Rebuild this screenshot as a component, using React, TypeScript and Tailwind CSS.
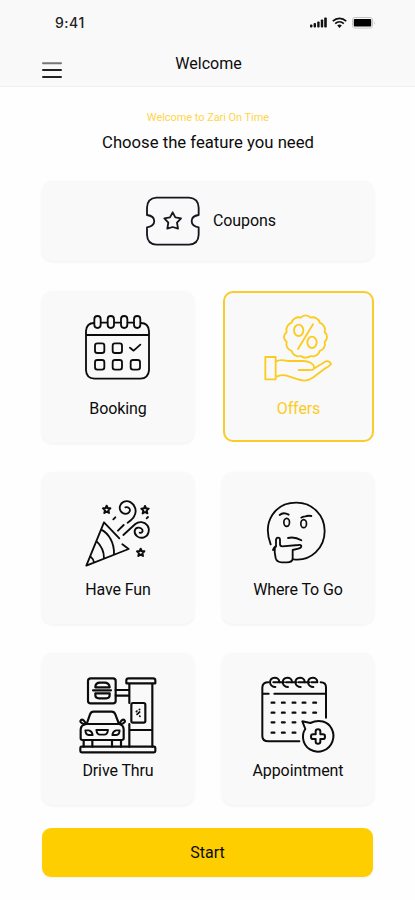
import type { ReactNode } from "react";

interface FeatureCardProps {
  label: string;
  viewBox: string;
  active?: boolean;
  children: ReactNode;
}

function FeatureCard({ label, viewBox, active, children }: FeatureCardProps) {
  return (
    <button
      className={`flex flex-col items-center rounded-[10px] bg-[#f9f9f9] ${
        active
          ? "h-[151px] w-[151px] justify-self-end text-[#fccb1f] outline-2 -outline-offset-2 outline-[#fbcb2b]"
          : "h-[152px] w-[152px] text-[#0c0c0c] shadow-[0_1px_3px_rgba(0,0,0,0.06)]"
      }`}
    >
      <svg
        className="mt-[15px] h-[92px] w-[92px] shrink-0"
        viewBox={viewBox}
        fill="none"
        stroke="currentColor"
        strokeWidth="5.5"
        strokeLinecap="round"
        strokeLinejoin="round"
      >
        {children}
      </svg>
      <span className="mt-px whitespace-nowrap text-base leading-5 tracking-[-0.1px]">{label}</span>
    </button>
  );
}

const STAR = "M0-10l3 7 8 1-6 6 2 8-7-4-7 4 2-8-6-6 8-1z";

function StatusBar() {
  return (
    <div className="flex h-[45px] items-center justify-between pl-[55px] pr-[39px]">
      <span className="font-['Inter'] text-sm font-medium tracking-[0.5px] text-[#222]">9:41</span>
      <div className="flex items-center gap-[5px] text-[#111]">
        <svg width="17" height="11" viewBox="0 0 17 11" fill="currentColor">
          <rect x="0" y="7.5" width="2.4" height="3" rx="0.8" />
          <rect x="3.6" y="6" width="2.4" height="4.5" rx="0.8" />
          <rect x="7.2" y="4.5" width="2.4" height="6" rx="0.8" />
          <rect x="10.8" y="2.5" width="2.4" height="8" rx="0.8" />
          <rect x="14.2" y="0.5" width="2.6" height="10" rx="0.8" />
        </svg>
        <svg width="15" height="11" viewBox="0 0 15 11" fill="none" stroke="currentColor" strokeWidth="1.7">
          <path d="M0.8 4.1C4.6.4 10.4.4 14.2 4.1M3.2 6.6c2.5-2.4 6.1-2.4 8.6 0" />
          <path d="M5.2 8.5c1.4-1.2 3.2-1.2 4.6 0L7.5 10.9z" fill="currentColor" stroke="none" />
        </svg>
        <svg width="24" height="12" viewBox="0 0 24 12">
          <rect x="0.5" y="0.5" width="20" height="10.6" rx="2.5" fill="none" stroke="#c4c4c4" />
          <rect x="1.8" y="2" width="17.4" height="7.6" rx="1" fill="#000" />
          <path d="M22 4.2v3.4q1.6-1.7 0-3.4z" fill="#b5b5b5" />
        </svg>
      </div>
    </div>
  );
}

export default function App() {
  return (
    <div className="flex h-[900px] w-full flex-col overflow-hidden bg-[#fefefe] font-['Roboto',sans-serif] text-[#0c0c0c]">
      <header className="h-[87px] shrink-0 border-b border-[#efefef] bg-[#f9f9f9]">
        <StatusBar />
        <div className="grid grid-cols-[1fr_auto_1fr] items-start pl-[42px] pr-10">
          <svg className="mt-4" width="20" height="18" viewBox="0 0 20 18" strokeWidth="2" strokeLinecap="round">
            <path d="M1 2.2h18" stroke="#777" />
            <path d="M1 9h18M1 16h18" stroke="#222" />
          </svg>
          <h1 className="mt-[7px] text-base leading-6">Welcome</h1>
        </div>
      </header>

      <main className="flex flex-col pl-[42px] pr-[41px]">
        <p className="mt-[23px] text-center text-[11px] leading-4 tracking-[-0.05px] text-[#ffd54a]">
          Welcome to Zari On Time
        </p>
        <h2 className="mt-[7px] text-center text-[16.7px] leading-5">Choose the feature you need</h2>

        <button className="mt-7 flex h-20 items-center rounded-[10px] bg-[#f9f9f9] pl-[103px] shadow-[0_1px_3px_rgba(0,0,0,0.06)]">
          <svg
            width="56"
            height="50"
            viewBox="345 286 168 150"
            fill="none"
            stroke="#17151f"
            strokeWidth="5.5"
            strokeLinejoin="round"
          >
            <path d="M379 291h98q28 2 29 30v22c-28 4-28 32 0 37v22q-1 28-29 30h-98q-27-2-28-30v-22c29-5 29-33 0-37v-22q1-28 28-30z" />
            <path d="M428 335l8 15 17 3-12 13 3 18-16-5-16 5 3-18-12-13 17-3z" />
          </svg>
          <span className="ml-3 text-base tracking-[-0.1px]">Coupons</span>
        </button>

        <div className="mt-[30px] grid grid-cols-[152px_152px] justify-between gap-y-[29px]">
          <FeatureCard label="Booking" viewBox="-9 3 276 276">
            <path d="M57 54q-22 0-24 24v118q1 24 25 25h138q24-1 26-25V78q-2-24-24-24M34 90h187M79 53h18M119 53h18M158 53h18" />
            <rect x="58" y="33" width="19" height="36" rx="9.5" />
            <rect x="98" y="33" width="19" height="36" rx="9.5" />
            <rect x="138" y="33" width="19" height="36" rx="9.5" />
            <rect x="177" y="33" width="19" height="36" rx="9.5" />
            <rect x="60" y="115" width="28" height="29" rx="7" />
            <rect x="113" y="115" width="28" height="29" rx="7" />
            <path d="M165 128l11 9 20-18" />
            <rect x="60" y="165" width="28" height="29" rx="7" />
            <rect x="113" y="165" width="28" height="29" rx="7" />
            <rect x="167" y="165" width="28" height="29" rx="7" />
          </FeatureCard>

          <FeatureCard label="Offers" viewBox="-6 3 276 276" active>
            <path d="M152 31q9 0 15 7 9-3 17 2 8 4 10 13 9 3 13 11 5 8 2 17 7 7 7 15t-7 15q3 9-2 17-4 8-13 10-2 9-10 13-8 5-17 2-7 5-15 5t-15-5q-9 3-17-2-8-4-10-13-9-2-13-10-5-8-2-17-8-7-8-15t8-15q-3-9 2-17 4-8 13-11 2-9 10-13 8-5 17-2 6-7 15-7z" />
            <path d="M174 58l-45 74" />
            <ellipse cx="131" cy="76" rx="14" ry="17" />
            <ellipse cx="171" cy="112" rx="14" ry="17" />
            <path d="M31 156h31v67H31zM62 170c14-9 25-4 37-2h45c19 0 31 8 33 17 2 10-7 11-15 10h-31M181 188l32-19q10-3 15 8-7 9-17 13l-38 28c-19 13-32 9-51 3l-27-9c-12-4-20-1-32 3" />
          </FeatureCard>

          <FeatureCard label="Have Fun" viewBox="-9 -9 276 276">
            <path d="M87 97L34 227l127-50-19-14M87 97l46 48M79 119c22 12 39 38 38 73M65 154c13 12 22 27 22 51M47 200c6 5 9 11 10 18" />
            <path d="M115 88l6-6M129 122l17-17M158 98c20-13 28-28 22-45-6-15-20-23-33-18-12 5-16 18-10 28 7 11 22 11 27 1 3-8-4-14-13-12" />
            <path d="M145 135l36-33c11-9 27-7 36 4 9 12 4 32-10 36-15 5-30-6-28-20 3-11 18-12 23-3 3 6-2 11-8 9M215 85l4-4" />
            <g strokeWidth="6">
              <path d={STAR} transform="translate(95 57)" />
              <path d={STAR} transform="translate(210 58)" />
              <path d={STAR} transform="translate(197 186)" />
            </g>
          </FeatureCard>

          <FeatureCard label="Where To Go" viewBox="-7 -9 276 276">
            <path d="M49 163C23 95 62 38 126 38c48 0 85 37 85 85 0 51-41 92-94 85" />
            <path d="M76 75q11-10 27-1M141 83q8-4 12-4 8-3 18-1M101 144q20-5 40 7" />
            <ellipse cx="97" cy="97" rx="8.5" ry="12" strokeWidth="5" />
            <ellipse cx="148" cy="101" rx="8.5" ry="12" strokeWidth="5" />
            <path d="M65 170v-20q1-7 6-7 6 0 6 7v13q0 6 7 6l48-4q9-1 9 4t-9 7l-17 4v25q-1 12-17 12H82q-14 0-18-12-5-18-2-35M62 170q-5 5-6 10" />
          </FeatureCard>

          <FeatureCard label="Drive Thru" viewBox="6 0 276 276">
            <g strokeWidth="6.5">
              <rect x="54" y="31" width="83" height="75" rx="8" />
              <path d="M76 58q0-14 14-14h13q15 0 16 14zM76 76v6q0 9 11 9h22q10 0 10-9v-6zM69 67h54M137 66h40M137 83h40" />
              <path d="M169 46V37q0-6 7-6h73q7 0 7 6v9zM178 46v59M247 46v190M178 168v68M178 186h69" />
              <rect x="184" y="105" width="42" height="59" rx="5" />
              <path d="M199 131l2-2M209 124l-1 1M201 139l8-7M210 145l-1-1" strokeWidth="5" />
              <path d="M50 168l10-29q3-8 11-8h54q8 0 11 8l11 29M50 168h97q13 2 14 16v27q0 5-6 5H37q-5 0-5-5v-27q1-14 18-16z" />
              <path d="M47 166q-7-14-14-10-7 6 10 13M149 166q7-14 14-10 7 6-10 13" />
              <path d="M46 187h11q10 3 11 14H56q-9-1-10-14zM149 187h-11q-10 3-11 14h12q9-1 10-14zM79 186h35q-2 14-11 14H90q-9 0-11-14z" strokeWidth="5.5" />
              <path d="M41 218v18M67 218v18M126 218v18M153 218v18" />
              <rect x="31" y="236" width="225" height="17" rx="4" />
            </g>
          </FeatureCard>

          <FeatureCard label="Appointment" viewBox="8 0 276 276">
            <path d="M57 43q-17 0-18 15v147q1 15 18 15h93M214 43q16 0 16 15v91M40 77h18M75 77h154M90 43h14M128 43h14M166 43h14" strokeWidth="6" />
            <path d="M62 43c1-18 27-18 28-2M62 43c1 8 8 14 16 14M100 43c1-18 27-18 28-2M100 43c1 8 8 14 16 14M138 43c1-18 27-18 28-2M138 43c1 8 8 14 16 14M176 43c1-18 27-18 28-2M176 43c1 8 8 14 16 14M72 43h18M110 43h18M148 43h18M186 43h18" strokeWidth="6" />
            <path
              d="M67 104h8M98 104h8M130 104h8M160 104h8M192 104h8M67 134h8M98 134h8M130 134h8M160 134h8M192 134h8M67 163h8M98 163h8M130 163h8M67 194h8M98 194h8M130 194h8"
              strokeWidth="7"
            />
            <path d="M159 160l24 5c27-13 53-4 64 17 13 25 1 56-25 66-29 11-58-8-61-38q-1-17 7-27z" strokeWidth="6" />
            <path
              d="M199 190q0-6 7-6t7 6v9h8q6 0 6 7t-6 7h-8v8q0 6-7 6t-7-6v-8h-8q-6 0-6-7t6-7h8z"
              strokeWidth="6"
            />
          </FeatureCard>
        </div>

        <button className="mr-px mt-[23px] h-[49px] rounded-[9px] bg-[#ffce00] pt-px text-base shadow-[0_1px_3px_rgba(0,0,0,0.06)]">
          Start
        </button>
      </main>
    </div>
  );
}
